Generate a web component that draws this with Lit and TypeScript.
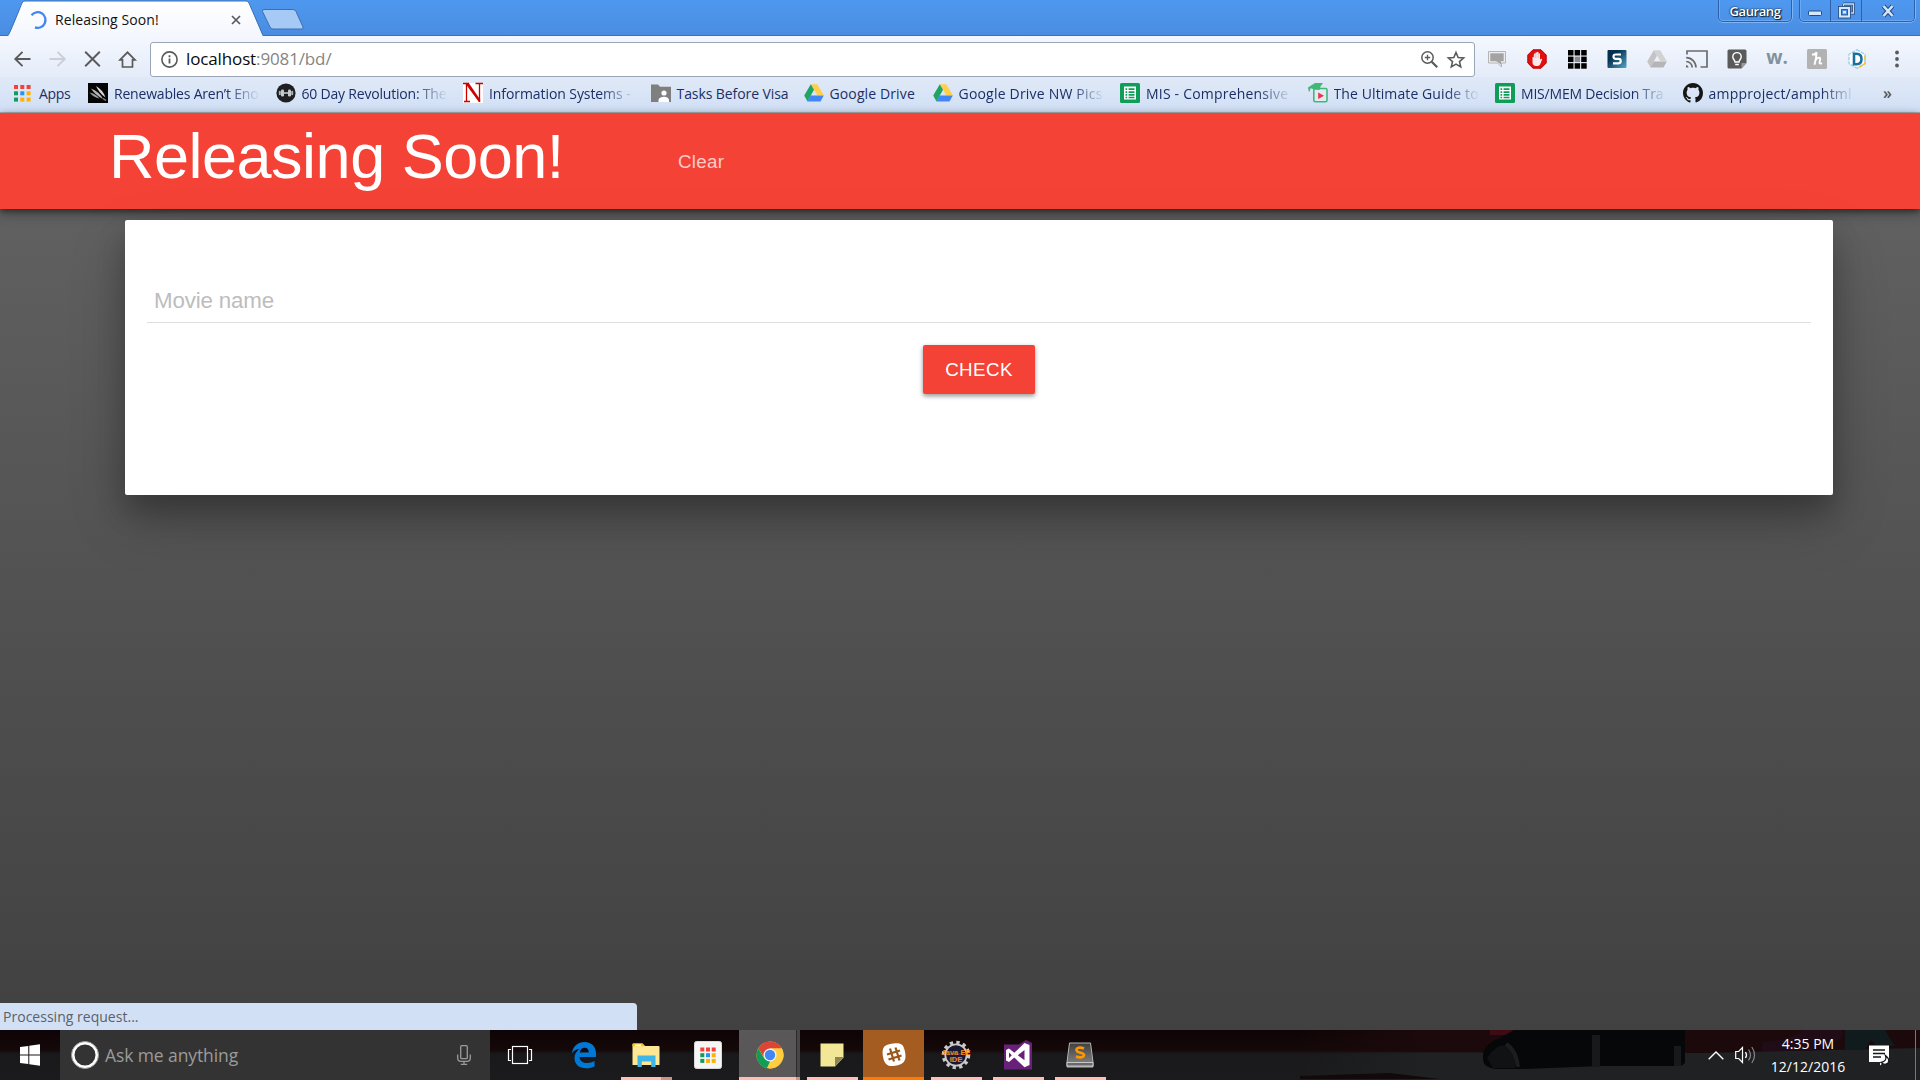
import { LitElement, html, svg, css } from "lit";
import { customElement } from "lit/decorators.js";
import { classMap } from "lit/directives/class-map.js";

const icon = (w: number, h: number, body: unknown) =>
  html`<svg width=${w} height=${h} viewBox="0 0 ${w} ${h}" fill="none">${body}</svg>`;

const dots = (size: number, step: number, colors: string[]) =>
  colors.map((c, i) => svg`<rect x=${(i % 3) * step} y=${Math.floor(i / 3) * step} width=${size} height=${size} fill=${c}/>`);

const APP_COLORS = ["#f44336", "#f44336", "#f44336", "#0f9d58", "#2196f3", "#ffb300", "#0f9d58", "#ffb300", "#ffb300"];

const driveShape = (a: string, b: string, c: string) => svg`
  <path d="M6.8 1.2h6.4l6.6 11h-6.5z" fill=${b}/>
  <path d="M6.8 1.2l3.2 5.6L3.5 18.4.2 12.6z" fill=${a}/>
  <path d="M6.7 12.4h13.1l-3.3 6H3.4z" fill=${c}/>`;

const sheetShape = svg`
  <rect width="20" height="20" rx="1.5" fill="#0f9d58"/>
  <path d="M4 3.5h12v13H4z" fill="#fff"/>
  <path d="M5.5 5.2h1.7v1.8H5.5zM8.6 5.2h5.9v1.8H8.6zM5.5 8.2h1.7V10H5.5zM8.6 8.2h5.9V10H8.6zM5.5 11.1h1.7v1.6H5.5zM8.6 11.1h5.9v1.6H8.6zM5.5 13.8h1.7v1.4H5.5zM8.6 13.8h5.9v1.4H8.6z" fill="#0f9d58"/>`;

const BOOKMARKS = [
  {
    label: "Renewables Aren’t Eno", cls: "b-ren", long: true,
    icon: svg`<rect width="20" height="20" fill="#050505"/><path d="M1.500 9.500q6 1 10 6-6-1-10-6z" fill="#999"/><path d="M3 5.500q8 3 12 10.500Q7 12 3 5.500z" fill="#b5b5b5"/><path d="M8 3q7 4 9.500 11.500Q11 10 8 3z" fill="#d8d8d8"/><path d="M15 15.500l3 2" stroke="#888" stroke-width="1.500"/>`,
  },
  {
    label: "60 Day Revolution: The", cls: "b-day", long: true,
    icon: svg`<circle cx="10" cy="10" r="9.600" fill="#1d1f20"/><rect x="2.800" y="7.800" width="2" height="4.400" rx="1" fill="#aeb4b6"/><rect x="5" y="6.500" width="3" height="7" rx="1.300" fill="#c4c9cb"/><rect x="12" y="6.500" width="3" height="7" rx="1.300" fill="#c4c9cb"/><rect x="15.200" y="7.800" width="2" height="4.400" rx="1" fill="#aeb4b6"/><path d="M8 10h4" stroke="#c4c9cb" stroke-width="1.600"/>`,
  },
  {
    label: "Information Systems -", cls: "b-info", long: true,
    icon: svg`<rect width="20" height="20" fill="#fff"/><path d="M0 .5h6M12.500 .5H20M1 18.500h6" stroke="#c00" stroke-width="1.300"/><path d="M3.500 1v17M16.500 1v18" stroke="#c00" stroke-width="1.300"/><path d="M2.300 .5h3.800l11 16V19h-1.200z" fill="#c00"/>`,
  },
  {
    label: "Tasks Before Visa", cls: "b-task", long: false,
    icon: svg`<path d="M0 1.500h7l2 2.200h11V19H0z" fill="#7f7f7f"/><circle cx="13" cy="10" r="2.600" fill="#fff"/><path d="M7.500 19v-1.500c0-3 3.500-3.800 5.500-3.800s5 .8 5 3.800V19z" fill="#fff"/>`,
  },
  { label: "Google Drive", cls: "b-drive", long: false, icon: driveShape("#1fa463", "#ffcf48", "#4285f4") },
  { label: "Google Drive NW Pics", cls: "b-pics", long: true, icon: driveShape("#1fa463", "#ffcf48", "#4285f4") },
  { label: "MIS - Comprehensive", cls: "b-mis", long: true, icon: sheetShape },
  {
    label: "The Ultimate Guide to", cls: "b-ult", long: true,
    icon: svg`<rect x="5.800" y="5.500" width="13.200" height="13.200" rx="1.500" fill="#dfeaf3" stroke="#3fb878" stroke-width="1.600"/><path d="M0 4.500L7 0h8l-2.500 3.500-1 3.500-5-.5-4-1.200-.8 3.200H.8z" fill="#3fb878"/><path d="M10.200 9.500v6.500l5.800-3.200z" fill="#ee3344"/>`,
  },
  { label: "MIS/MEM Decision Tra", cls: "b-mem", long: true, icon: sheetShape },
  {
    label: "ampproject/amphtml", cls: "b-amp", long: true,
    icon: svg`<path transform="scale(1.25)" fill="#171515" d="M8 0C3.580 0 0 3.580 0 8c0 3.540 2.290 6.530 5.470 7.590.4.070.55-.17.55-.38 0-.19-.01-.82-.01-1.490-2.010.37-2.530-.49-2.690-.94-.09-.23-.48-.94-.82-1.130-.28-.15-.68-.52-.01-.53.63-.01 1.080.58 1.230.82.72 1.210 1.870.87 2.330.66.070-.52.28-.87.51-1.070-1.780-.2-3.640-.89-3.640-3.950 0-.87.31-1.590.82-2.150-.08-.2-.36-1.020.08-2.120 0 0 .67-.21 2.200.82.64-.18 1.320-.27 2-.27s1.360.09 2 .27c1.530-1.040 2.200-.82 2.200-.82.44 1.100.16 1.920.08 2.120.51.56.82 1.270.82 2.150 0 3.070-1.870 3.750-3.650 3.950.29.25.54.73.54 1.480 0 1.070-.01 1.930-.01 2.200 0 .21.15.46.55.38A8.010 8.010 0 0 0 16 8c0-4.420-3.580-8-8-8z"/>`,
  },
];

const EXTENSIONS = [
  icon(20, 20, svg`<path d="M1.500 2.500h17v11.500h-4v4l-4-4h-9z" fill="#ececec" stroke="#b4b4b4"/><path d="M3.300 4.300h13.400v7.900H3.300z" fill="#a3a3a3"/><path d="M9 12h5v3.500z" fill="#a3a3a3"/>`),
  icon(20, 20, svg`<path d="M6 .8h8L19.200 6v8L14 19.200H6L.8 14V6z" fill="#e01010" stroke="#b90000"/><path d="M5.500 8.500c0-1 1.400-1 1.400 0V5.200c0-1 1.500-1 1.500 0V4c0-1 1.500-1 1.500 0v-.5c0-1 1.600-1 1.600 0V5c0-1 1.500-1 1.500 0v5.800c.8-1.300 2.400-1.500 2 0l-1.700 4.200c-.5 1.300-1.300 2-2.800 2H9c-2 0-3.500-1.300-3.500-3.500z" fill="#f6eaea"/><path d="M7 9V6M8.500 9V5M10 9V4.500M11.500 9V5" stroke="#e6a0a0" stroke-width=".4"/>`),
  icon(19, 19, svg`${dots(5.5, 6.600, ["#000", "#000", "#000", "#000", "#8a8a8a", "#000", "#000", "#000", "#000"])}`),
  icon(20, 18, svg`<defs><linearGradient id="sg" x1="0" y1="0" x2="1" y2="1"><stop offset=".3" stop-color="#042f4f"/><stop offset="1" stop-color="#55a6c8"/></linearGradient></defs><rect x=".5" width="19" height="18" rx="1" fill="url(#sg)"/><path d="M14 4.500H8.500Q6.500 4.500 6.500 6.500T8.500 8.900h3.200q2 0 2 2.200t-2 2.200H6" stroke="#fff" stroke-width="2.200"/>`),
  icon(20, 20, svg`${driveShape("#c4c4c4", "#d2d2d2", "#b5b5b5")}`),
  icon(22, 18, svg`<path d="M1 4.500V1h20v16h-6.500" stroke="#6b6b6b" stroke-width="1.700"/><path d="M0 17.500v-2.600a3 3 0 0 1 2.700 2.600z" fill="#6b6b6b"/><path d="M.2 11.500a6 6 0 0 1 6 6M.2 7.700a9.800 9.800 0 0 1 9.800 9.800" stroke="#6b6b6b" stroke-width="1.700"/>`),
  icon(20, 20, svg`<path d="M2 .5h16a1.500 1.500 0 0 1 1.500 1.500v12l-5 5.500H2A1.500 1.500 0 0 1 .5 18V2A1.500 1.500 0 0 1 2 .5z" fill="#5a5a5a"/><path d="M19.500 14h-5v5.500z" fill="#9a9a9a"/><path d="M8 13c0-2-2.200-2.600-2.200-5.200a4.200 4.200 0 0 1 8.400 0C14.200 10.400 12 11 12 13zM8.200 15.500h3.600" stroke="#fff" stroke-width="1.400"/>`),
  html`<span class="ext-w">w.</span>`,
  icon(20, 20, svg`<rect width="20" height="20" rx="1.500" fill="#b2b2b2"/><path d="M5 5.500Q8 6 9.500 3.200 9.500 9 7.500 15.800M8 12q2.500-4 4.500-3.300 1.300.6.300 3.300-1.200 3.800 2.200 2.200" stroke="#fff" stroke-width="1.900"/>`),
  icon(20, 20, svg`<path d="M10 .8l8 4.500v9.400l-8 4.500-8-4.500V5.300z" fill="#fff" stroke="#8fd0ea" stroke-width="1.300" stroke-dasharray="3.500 1"/><path d="M18 7v7.700l-8 4.500" stroke="#f1c232" stroke-width="1.500" stroke-dasharray="4 1.200"/><path d="M7 4.800h2.500c3.200 0 5 2 5 5.200s-1.800 5.200-5 5.200H7z" stroke="#1b6f9c" stroke-width="2.600"/>`),
];

const TASKS = [
  { cls: "", icon: icon(26, 28, svg`<path d="M.8 12.500C2 5 7 1 13.500 1 21 1 25 6 25 12.500V16H8.500c.3 4 3.500 6 7.500 6 3 0 5.500-.8 7.500-2v5.500c-2.300 1.200-5 1.800-8.500 1.800C8 27.300 3.500 23.500 3.500 17c0-4 2-7.300 5.500-9.300C5.500 8 2.500 9.500.8 12.500zM8.800 11.500h9c0-3-1.500-4.700-4.200-4.700-2.600 0-4.300 1.900-4.800 4.700z" fill="#0078d7"/>`) },
  { cls: "open pair", icon: icon(28, 25, svg`<path d="M.5 1.500Q.5.5 1.500.5h9l2.500 2.500h13.500q1 0 1 1V22H.5z" fill="#ffe793"/><path d="M.5 1.500Q.5.5 1.500.5h9L13 3.200H.5z" fill="#fcc419"/><path d="M3 1.500h6v1.600H3z" fill="#fff"/><path d="M5.500 24V12.500h18V24h-4.300v-5.500H9.800V24z" fill="#3fb6e8"/>`) },
  { cls: "", icon: icon(28, 28, svg`<rect x=".5" y=".5" width="27" height="27" rx="2" fill="#f6f6f6" stroke="#d8d8d8"/><g transform="translate(6.300 6.500)">${dots(4, 5.700, APP_COLORS)}</g>`) },
  { cls: "open active", icon: icon(28, 28, svg`<circle cx="14" cy="14" r="13.500" fill="#ffcd40"/><path d="M2.300 7.300A13.500 13.500 0 0 1 25.900 7.600L14 7.600 8.500 17z" fill="#db4437"/><path d="M2.300 7.300L8.300 17.500l5.700 3-3.200 6.700A13.500 13.500 0 0 1 2.300 7.300z" fill="#0f9d58"/><path d="M14 7.600h11.900A13.500 13.500 0 0 1 12.500 27.400l7-10.600z" fill="#ffcd40"/><circle cx="14" cy="14" r="6.500" fill="#f4f4f4"/><circle cx="14" cy="14" r="5.200" fill="#4285f4"/>`) },
  { cls: "open", icon: icon(24, 24, svg`<path d="M.5.500h23v14L15 23.500H.5z" fill="#f2e796"/><path d="M23.500 14L15 23.500V14z" fill="#8c8656"/>`) },
  { cls: "open alert", icon: icon(26, 26, svg`<path d="M4 4C8 1.500 15 .8 19 1.800c3 .8 4.200 4 5 8 .8 4 .9 8-1.500 10.500-3 3-8.500 4.200-13 3.700C5 23.500 3 20 2.200 15.500 1.400 11 1 6.500 4 4z" fill="#fff"/><path d="M9 6.500l4 13M14.500 5.500l4 13M6 12.500l13-4M7.500 17.500l13-4" stroke="#9d5619" stroke-width="2.200"/>`) },
  { cls: "open", icon: icon(30, 30, svg`<circle cx="15" cy="15" r="12.500" stroke="#c9c9c9" stroke-width="3.500" stroke-dasharray="3.270 3.270"/><circle cx="15" cy="15" r="10.700" fill="#1c1832" stroke="#c9c9c9" stroke-width="1.800"/><path d="M7 14h16M8 19h14" stroke="#3d3764" stroke-width="1.500"/><text x="15" y="14.500" class="ide">Java EE</text><text x="15" y="21.500" class="ide">IDE</text>`) },
  { cls: "open", icon: icon(28, 30, svg`<path d="M0 4.500h15L22 0l6 3v26.500H0z" fill="#68217a"/><path d="M2 10l3-1.500 5.300 4.300L20.500 3l5 2v20l-5 2.300-10.200-9.800L5 22l-3-1.500zM5 12.500v5.500l2.800-2.800zM13.800 15.200l6.700 5V10z" fill="#fff" fill-rule="evenodd"/>`) },
  { cls: "open", icon: icon(28, 26, svg`<defs><linearGradient id="sb" x1="0" y1="0" x2="0" y2="1"><stop offset="0" stop-color="#3f3f3f"/><stop offset="1" stop-color="#8a8a8a"/></linearGradient></defs><path d="M3.500 1h21L27 20v5H1v-5z" fill="url(#sb)" stroke="#b5b5b5"/><path d="M1 20.500h26V24H1z" fill="#696969" stroke="#ddd" stroke-width=".8"/><path d="M18 6.500C14 5 10.500 5.500 10.500 8c0 3.500 7.500 2 7.500 5 0 2.500-4 3-8 1.500" stroke="#ff9800" stroke-width="2.600"/>`) },
];

@customElement("app-root")
export class AppRoot extends LitElement {
  static styles = css`
    :host {
      display: flex;
      flex-direction: column;
      width: 1920px;
      height: 1080px;
      overflow: hidden;
      font-family: "Open Sans", "Noto Sans", sans-serif;
      font-size: 14px;
    }
    * { box-sizing: border-box; }
    svg { display: block; flex: none; overflow: visible; }
    .tabstrip {
      display: flex;
      height: 36px;
      padding-left: 8px;
      background: linear-gradient(#4f98ef, #498de2);
      border-bottom: 1px solid #3a70b8;
      flex: none;
    }
    .tab {
      position: relative;
      display: flex;
      align-items: center;
      width: 256px;
      height: 36px;
      padding: 3px 23px 0 22px;
      color: #111;
    }
    .tab-shape { position: absolute; left: 0; top: 0; }
    .tab-title { position: relative; margin-left: 8px; letter-spacing: 0.08px; flex: 1; white-space: nowrap; }
    .tab > .spin, .tab > .close { position: relative; display: block; }
    .newtab { margin: 9px 0 0 -3px; }
    .spacer { flex: 1; }
    .user, .winctl {
      display: flex;
      height: 22px;
      border: 1px solid #2d62ab;
      border-top: 0;
      border-radius: 0 0 5px 5px;
      box-shadow: 0 1px 0 #7db4f5, 1px 0 0 #7db4f5, inset 1px 0 0 #6aa8f3, inset 0 -1px 0 #6aa8f3;
    }
    .user {
      width: 74px;
      justify-content: center;
      align-items: center;
      color: #fff;
      font-size: 13px;
      font-weight: 600;
      letter-spacing: -0.4px;
      text-shadow: 0 0 1px #123, 0 0 2px #123, 1px 1px 1px #123;
      margin-right: 7px;
    }
    .winctl { width: 116px; margin-right: 5px; }
    .winctl span { display: flex; align-items: center; justify-content: center; width: 31px; border-right: 1px solid #2d62ab; }
    .winctl span:first-child { padding-top: 4px; }
    .winctl span:last-child { flex: 1; border: 0; }
    .toolbar {
      display: flex;
      align-items: center;
      height: 41px;
      padding: 5px 0 0 14px;
      background: linear-gradient(#f4f7fe, #e4ecf9);
      flex: none;
    }
    .nav { display: flex; gap: 18px; align-items: center; width: 136px; }
    .omnibox {
      display: flex;
      align-items: center;
      width: 1325px;
      height: 35px;
      padding: 0 9px 0 10px;
      background: #fff;
      border: 1px solid #9aa5b8;
      border-radius: 3px;
    }
    .url { flex: 1; margin-left: 8px; font-size: 17px; letter-spacing: -0.13px; color: #858585; line-height: 30px; padding-bottom: 1px; }
    .url b { color: #0a0a0a; font-weight: 400; }
    .omni-r { display: flex; gap: 9px; align-items: center; }
    .exts { display: flex; margin-left: 2px; }
    .exts > span { display: flex; width: 40px; height: 20px; align-items: center; justify-content: center; }
    .exts .ext-w { width: auto; height: auto; font: 700 19px/16px "Open Sans", sans-serif; color: #82929c; padding-bottom: 5px; }
    .bookmarks {
      display: flex;
      align-items: center;
      height: 36px;
      padding: 0 0 3px 14px;
      background: linear-gradient(#e0e9f7, #d1e0f6);
      border-bottom: 1px solid #b3b3b3;
      color: #1b2f66;
      flex: none;
    }
    .bookmarks svg, .bookmarks .more { position: relative; }
    .apps { display: flex; align-items: center; gap: 8px; width: 74px; }
    .bm { display: flex; align-items: center; gap: 6px; margin-right: 15px; white-space: nowrap; }
    .bm span, .apps span { line-height: 22px; margin-top: 2px; letter-spacing: -0.2px; }
    .apps span { letter-spacing: -0.3px; }
    .bm.long span {
      width: 146.500px;
      overflow: hidden;
      -webkit-mask-image: linear-gradient(90deg, #000 112px, transparent 146px);
      mask-image: linear-gradient(90deg, #000 112px, transparent 146px);
    }
    .b-info span { letter-spacing: -0.08px; }
    .b-task span { width: 112px; letter-spacing: -0.08px; }
    .b-drive span { width: 88px; letter-spacing: 0.12px; }
    .b-pics span, .b-mis span, .b-amp span { letter-spacing: 0.2px; }
    .b-ult span { letter-spacing: 0.1px; }
    .more { margin-left: 13px; font-size: 16px; color: #555; line-height: 20px; font-weight: 600; padding-bottom: 1px; }
    .page {
      position: relative;
      display: flex;
      flex-direction: column;
      height: 917px;
      background: linear-gradient(#646464, #414141);
      font-family: "Liberation Sans", Arial, sans-serif;
      flex: none;
    }
    .navbar {
      display: flex;
      height: 96px;
      padding-left: 109px;
      background: #f44336;
      color: #fff;
      box-shadow: 0 2px 6px rgba(0, 0, 0, 0.45), 0 4px 12px rgba(0, 0, 0, 0.3);
      flex: none;
    }
    .brand { width: 569px; font-size: 63px; letter-spacing: -0.5px; line-height: 86px; white-space: nowrap; }
    .clear { font-size: 18.750px; letter-spacing: 0.3px; line-height: 98px; color: #fbccc8; }
    .card {
      display: flex;
      flex-direction: column;
      align-items: center;
      width: 1708px;
      height: 275px;
      margin: 11px 0 0 125px;
      padding: 51px 22px 0;
      background: #fff;
      border-radius: 2px;
      box-shadow: 0 16px 28px 0 rgba(0, 0, 0, 0.22), 0 25px 55px 0 rgba(0, 0, 0, 0.21);
    }
    .field { align-self: stretch; height: 52px; padding-left: 7px; border-bottom: 1px solid #e0e0e0; color: #bdbdbd; font-size: 22.300px; letter-spacing: -0.15px; line-height: 60px; }
    .check {
      margin-top: 22px;
      width: 112px;
      height: 49px;
      border-radius: 2px;
      background: #f44336;
      color: #fff;
      font-size: 18.750px;
      line-height: 49px;
      letter-spacing: 0.400px;
      text-align: center;
      box-shadow: 0 2px 5px rgba(0, 0, 0, 0.26), 0 2px 4px rgba(0, 0, 0, 0.2);
    }
    .status {
      position: absolute;
      left: 0;
      bottom: 0;
      width: 637px;
      height: 27px;
      padding-left: 3px;
      background: #d2e0f6;
      border-radius: 0 4px 0 0;
      color: #5b6167;
      font: 14px/27px "Open Sans", sans-serif;
      letter-spacing: 0.02px;
    }
    .taskbar {
      position: relative;
      display: flex;
      height: 50px;
      background: linear-gradient(#0f0405 0, #140809 40%, #19191b 48%, #1b1b1d 100%);
      flex: none;
    }
    .photo { position: absolute; right: 0; top: 0; }
    .start { display: flex; width: 60px; justify-content: center; align-items: center; }
    .search { display: flex; width: 430px; align-items: center; padding: 0 19px 0 11px; background: #333; color: #9b9b9b; font-size: 17.500px; }
    .search span { flex: 1; margin-left: 6px; letter-spacing: -0.100px; padding-bottom: 1px; }
    .taskview { display: flex; width: 63px; padding-right: 3px; justify-content: center; align-items: center; }
    .task { display: flex; position: relative; width: 62px; align-items: center; justify-content: center; padding-right: 1px; }
    .task.open::after { content: ""; position: absolute; left: 5.500px; right: 5px; bottom: 0; height: 3px; background: #ffbdb3; }
    .task.pair::after { background: linear-gradient(90deg, #ffbdb3 40px, #c9938c 40px); }
    .task.active { background: linear-gradient(90deg, #595757 57px, #2d2b2b 57px, #2d2b2b 58px, #484646 58px, #484646 61px, transparent 61px); }
    .task.active::after { left: 0; right: 1px; background: linear-gradient(90deg, #ffbdb3 57px, #c9938c 57px); }
    .task.alert { background: linear-gradient(90deg, #a55c20 61px, transparent 61px); }
    .task.alert::after { left: 0; right: 1px; background: #ff7a00; }
    .ide { font: 700 7.500px "Liberation Sans", sans-serif; fill: #f08a24; text-anchor: middle; }
    .tray { position: relative; display: flex; margin-left: auto; align-items: center; color: #fff; }
    .up { margin-right: 11px; }
    .clock { width: 80px; margin: 0 21px 0 12px; text-align: center; font-size: 14px; line-height: 23px; letter-spacing: 0; white-space: nowrap; padding-bottom: 1px; }
    .edge { width: 1px; height: 50px; background: #75797a; margin: 0 4px 0 25px; }
  `;

  render() {
    return html`
      <div class="tabstrip">
        <div class="tab">
          <svg class="tab-shape" width="256" height="36" viewBox="0 0 256 36">
            <defs><linearGradient id="tg" x1="0" y1="0" x2="0" y2="1"><stop offset="0" stop-color="#fff"/><stop offset="1" stop-color="#f4f7fe"/></linearGradient></defs>
            <path d="M0 36C2 34 12 8 14 3Q15 1 17 1H238Q240 1 241 3L255 36z" fill="url(#tg)"/>
            <path d="M0 35.500C2 33 12 8 14 3Q15 1 17 1H238Q240 1 241 3L255 35.500" fill="none" stroke="#3a70b8"/>
          </svg>
          <span class="spin">${icon(17, 18, svg`<path d="M1.500 4.200A7.800 7.800 0 1 1 5 16.300" stroke="#4285f4" stroke-width="2.300"/>`)}</span>
          <span class="tab-title">Releasing Soon!</span>
          <span class="close">${icon(10, 10, svg`<path d="M1 1l8 8M9 1L1 9" stroke="#5a5a5a" stroke-width="1.700"/>`)}</span>
        </div>
        <div class="newtab">${icon(44, 22, svg`<path d="M3 .5h29q2 0 3 2l7 15.500q.7 2-1 2H12q-2 0-3-2L1.500 2.500Q1 .5 3 .5z" fill="#a6c9f6" stroke="#3a70b8"/>`)}</div>
        <div class="spacer"></div>
        <div class="user">Gaurang</div>
        <div class="winctl">
          <span>${icon(14, 6, svg`<rect x=".5" y="1" width="13" height="4.500" rx="1" fill="#d5e7fb" stroke="#244a80"/>`)}</span>
          <span>${icon(16, 15, svg`<path d="M5.500 1h10v9h-3.500M5.500 1v3" stroke="#244a80" stroke-width="3"/><path d="M5.500 1h10v9h-3.500M5.500 1v3" stroke="#c7def9" stroke-width="1.300"/><rect x="2" y="5" width="9" height="8.500" stroke="#244a80" stroke-width="4"/><rect x="2" y="5" width="9" height="8.500" stroke="#d5e7fb" stroke-width="2.200"/><rect x="5" y="8" width="3" height="2.500" fill="#d5e7fb"/>`)}</span>
          <span>${icon(14, 12, svg`<path d="M2.500 1l9 10M11.500 1l-9 10" stroke="#244a80" stroke-width="4.500"/><path d="M2.500 1l9 10M11.500 1l-9 10" stroke="#d5e7fb" stroke-width="2.600"/>`)}</span>
        </div>
      </div>

      <div class="toolbar">
        <div class="nav">
          ${icon(17, 16, svg`<path d="M16.500 8H1.500M8.500 .8L1.300 8l7.200 7.200" stroke="#5a5a5a" stroke-width="1.900"/>`)}
          ${icon(17, 16, svg`<path d="M.5 8h15M8.500 .8L15.700 8l-7.200 7.200" stroke="#c9ced8" stroke-width="1.900"/>`)}
          ${icon(17, 16, svg`<path d="M1.200 .8l14.600 14.400M15.800 .8L1.200 15.200" stroke="#5a5a5a" stroke-width="2"/>`)}
          ${icon(17, 17, svg`<path d="M1 8.800L8.500 1.300 16 8.800h-2.500v7.200h-10V8.800z" stroke="#5a5a5a" stroke-width="1.700"/>`)}
        </div>
        <div class="omnibox">
          ${icon(17, 17, svg`<circle cx="8.500" cy="8.500" r="7.600" stroke="#5a5a5a" stroke-width="1.600"/><path d="M8.500 7.500v5M8.500 4.300v1.900" stroke="#5a5a5a" stroke-width="1.800"/>`)}
          <div class="url"><b>localhost</b>:9081/bd/</div>
          <div class="omni-r">
            ${icon(17, 17, svg`<circle cx="6.500" cy="6.500" r="5.700" stroke="#5a5a5a" stroke-width="1.500"/><path d="M10.700 10.700l5.500 5.500" stroke="#5a5a5a" stroke-width="2.200"/><path d="M3.800 6.500h5.400M6.500 3.800v5.400" stroke="#5a5a5a" stroke-width="1.300"/>`)}
            ${icon(18, 17, svg`<path d="M9 1.500l2.200 5 5.400.5-4.100 3.600 1.200 5.300L9 13.100l-4.700 2.800 1.200-5.300L1.400 7l5.400-.5z" stroke="#5a5a5a" stroke-width="1.600"/>`)}
          </div>
        </div>
        <div class="exts">
          ${EXTENSIONS.map((e) => html`<span>${e}</span>`)}
          <span>${icon(4, 18, svg`<circle cx="2" cy="2.500" r="1.900" fill="#5a5a5a"/><circle cx="2" cy="9" r="1.900" fill="#5a5a5a"/><circle cx="2" cy="15.500" r="1.900" fill="#5a5a5a"/>`)}</span>
        </div>
      </div>

      <div class="bookmarks">
        <div class="apps">${icon(17, 17, svg`${dots(4, 6.300, APP_COLORS)}`)}<span>Apps</span></div>
        ${BOOKMARKS.map((b) => html`<div class=${classMap({ bm: true, long: b.long, [b.cls]: true })}>${icon(20, 20, b.icon)}<span>${b.label}</span></div>`)}
        <span class="more">»</span>
      </div>

      <div class="page">
        <div class="navbar"><div class="brand">Releasing Soon!</div><div class="clear">Clear</div></div>
        <div class="card"><div class="field">Movie name</div><div class="check">CHECK</div></div>
        <div class="status">Processing request...</div>
      </div>

      <div class="taskbar">
        <svg class="photo" width="620" height="50" viewBox="0 0 620 50">
          <defs>
            <linearGradient id="fade" x1="0" x2="1"><stop offset="0" stop-color="#1c0b0d" stop-opacity="0"/><stop offset=".2" stop-color="#1b090b"/></linearGradient>
            <linearGradient id="floor" x1="0" x2="1"><stop offset="0" stop-color="#1f2122" stop-opacity="0"/><stop offset=".2" stop-color="#1f2122"/></linearGradient>
          </defs>
          <rect width="620" height="24" fill="url(#fade)"/>
          <path d="M0 22L400 23 620 18V50H0z" fill="url(#floor)"/>
          <path d="M190 0h24v5h-24z" fill="#3b0c12"/>
          <path d="M183 25Q184 14 200 8L214 0H385V32Q384 36 378 36L300 36 225 39H196Q184 38 183 30z" fill="#060708"/>
          <path d="M187 28q10-16 22-12 8 8 6 22h-22z" fill="#101214"/>
          <path d="M206 14q10 6 12 23" stroke="#1b1e20" stroke-width="4" fill="none"/>
          <path d="M292 5h8v32h-8zM374 16h7v20h-7z" fill="#17191b"/>
          <path d="M462 12q30-2 40-12h40q4 10-10 12l-22 9h-48z" fill="#1f0c16"/>
          <path d="M545 0h40q6 10 10 16h-18l-6-6-6 10h-20z" fill="#0f1b1c"/>
          <path d="M0 46l90-3 50 6H0z" fill="#120a0a"/>
        </svg>
        <div class="start">${icon(20, 22, svg`<path d="M0 3.100L8.300 2v8.500H0zM9.300 1.800L20 .3v10.200H9.300zM0 11.500h8.300V20L0 18.900zM9.300 11.500H20v10.200L9.300 20.200z" fill="#fff"/>`)}</div>
        <div class="search">
          ${icon(28, 28, svg`<circle cx="14" cy="14" r="12" stroke="#fff" stroke-width="3"/><circle cx="14" cy="14" r="13.500" stroke="#999"/>`)}
          <span>Ask me anything</span>
          ${icon(14, 20, svg`<rect x="3.700" y=".7" width="6.600" height="13" rx="1" stroke="#9b9b9b" stroke-width="1.300"/><path d="M.7 9.500v3.500q0 3.300 3.300 3.300h6q3.300 0 3.300-3.300V9.500M7 16.500v2.800M3.800 19.300h6.400" stroke="#9b9b9b" stroke-width="1.300"/>`)}
        </div>
        <div class="taskview">${icon(24, 18, svg`<rect x="4.500" y=".5" width="15" height="17" stroke="#fff" stroke-width="1.200"/><path d="M3 3.500H.5v11H3M21 3.500h2.500v11H21" stroke="#fff" stroke-width="1.200"/>`)}</div>
        ${TASKS.map((t) => html`<div class="task ${t.cls}">${t.icon}</div>`)}
        <div class="tray">
          <span class="up">${icon(16, 9, svg`<path d="M.7 8.300L8 1l7.300 7.300" stroke="#fff" stroke-width="1.400"/>`)}</span>
          ${icon(21, 18, svg`<path d="M.7 5.500h3l3.800-4v15l-3.800-4h-3z" stroke="#fff" stroke-width="1.200"/><path d="M10.500 6q2 3 0 6" stroke="#fff" stroke-width="1.300"/><path d="M13.500 3.500q4 5.500 0 11M16.800 1q5.500 8 0 16" stroke="#85898a" stroke-width="1.200"/>`)}
          <div class="clock">4:35 PM<br />12/12/2016</div>
          ${icon(21, 21, svg`<path d="M0 .5h20V17h-5l-4 3.500V17H0z" fill="#fff"/><path d="M4 5h12M4 8.500h12M4 12h8" stroke="#15181a" stroke-width="1.300"/><path d="M16.500 10.500q2 5.500-4.500 7 4 3.500 7 .5 2.500-3.500-2.500-7.500z" fill="#fff" stroke="#15181a" stroke-width="1.300"/>`)}
          <div class="edge"></div>
        </div>
      </div>
    `;
  }
}
